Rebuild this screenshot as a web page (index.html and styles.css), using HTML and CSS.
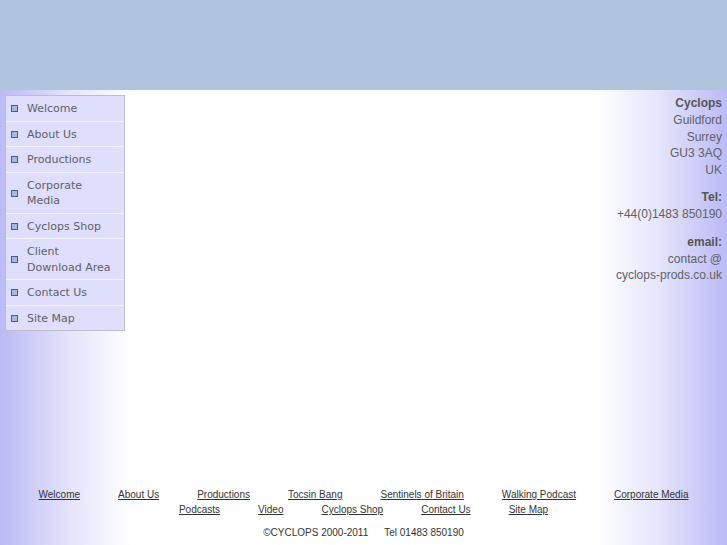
FILE: index.html
```html
<!DOCTYPE html>
<html>
<head>
<meta charset="utf-8">
<link rel="stylesheet" href="styles.css">
</head>
<body>
<div class="header"></div>
<div class="page">
  <div class="main">
    <ul class="menu">
      <li><span class="bullet"></span><a href="#">Welcome</a></li>
      <li><span class="bullet"></span><a href="#">About Us</a></li>
      <li><span class="bullet"></span><a href="#">Productions</a></li>
      <li><span class="bullet"></span><a href="#">Corporate<br>Media</a></li>
      <li><span class="bullet"></span><a href="#">Cyclops Shop</a></li>
      <li><span class="bullet"></span><a href="#">Client<br>Download Area</a></li>
      <li><span class="bullet"></span><a href="#">Contact Us</a></li>
      <li><span class="bullet"></span><a href="#">Site Map</a></li>
    </ul>
    <div class="address">
      <div class="block">
        <b>Cyclops</b>Guildford<br>Surrey<br>GU3 3AQ<br>UK
      </div>
      <div class="block">
        <b>Tel:</b>+44(0)1483 850190
      </div>
      <div class="block">
        <b>email:</b>contact @<br>cyclops-prods.co.uk
      </div>
    </div>
  </div>
  <div class="footer">
    <div class="links">
      <a href="#">Welcome</a>
      <a href="#">About Us</a>
      <a href="#">Productions</a>
      <a href="#">Tocsin Bang</a>
      <a href="#">Sentinels of Britain</a>
      <a href="#">Walking Podcast</a>
      <a href="#">Corporate Media</a>
      <a href="#">Podcasts</a>
      <a href="#">Video</a>
      <a href="#">Cyclops Shop</a>
      <a href="#">Contact Us</a>
      <a href="#">Site Map</a>
    </div>
    <div class="copy"><span>&copy;CYCLOPS 2000-2011</span><span>Tel 01483 850190</span></div>
  </div>
</div>
</body>
</html>
```
FILE: styles.css
```css
html, body {
  margin: 0;
  padding: 0;
  height: 100%;
}
body {
  width: 727px;
  height: 545px;
  overflow: hidden;
  display: flex;
  flex-direction: column;
  font-family: "Liberation Sans", Arial, sans-serif;
}
.header {
  height: 90px;
  background: #b0c4de;
  flex: none;
}
.page {
  flex: 1;
  display: flex;
  flex-direction: column;
  background: linear-gradient(to right, #babaf6 0px, #e4e4fc 70px, #ffffff 132px, #ffffff 596px, #e4e4fc 660px, #babaf6 727px);
}
.main {
  flex: 1;
  display: flex;
  justify-content: space-between;
  align-items: flex-start;
  padding: 4px 5px 0 5px;
}
.menu {
  list-style: none;
  margin: 1px 0 0 0;
  padding: 0;
  width: 118px;
  background: #dfdefc;
  border: 1px solid #bdbdcb;
  font-family: "DejaVu Sans", Verdana, sans-serif;
  font-size: 11px;
  line-height: 15.5px;
}
.menu li {
  display: flex;
  align-items: center;
  padding: 5px 0 4px 5px;
  border-bottom: 1px solid #f3f3ff;
}
.menu li:last-child {
  border-bottom: none;
}
.menu a {
  color: #5e5e6a;
  text-decoration: none;
}
.bullet {
  width: 5px;
  height: 5px;
  border: 1px solid #3f5f99;
  background: #a9b7e3;
  margin: 0 9px 0 0;
  flex: none;
}
.address {
  text-align: right;
  font-size: 12px;
  line-height: 16.5px;
  color: #626262;
}
.address b {
  display: block;
  line-height: 18px;
  color: #555;
}
.address .block {
  margin-bottom: 10px;
}
.footer {
  padding-bottom: 5px;
  font-size: 10px;
  color: #333;
}
.links {
  display: flex;
  flex-wrap: wrap;
  justify-content: center;
  column-gap: 38px;
  line-height: 15px;
}
.links a {
  color: #333;
  text-decoration: underline;
}
.copy {
  display: flex;
  justify-content: center;
  column-gap: 16px;
  margin-top: 8px;
  line-height: 15px;
  color: #333;
}
```
